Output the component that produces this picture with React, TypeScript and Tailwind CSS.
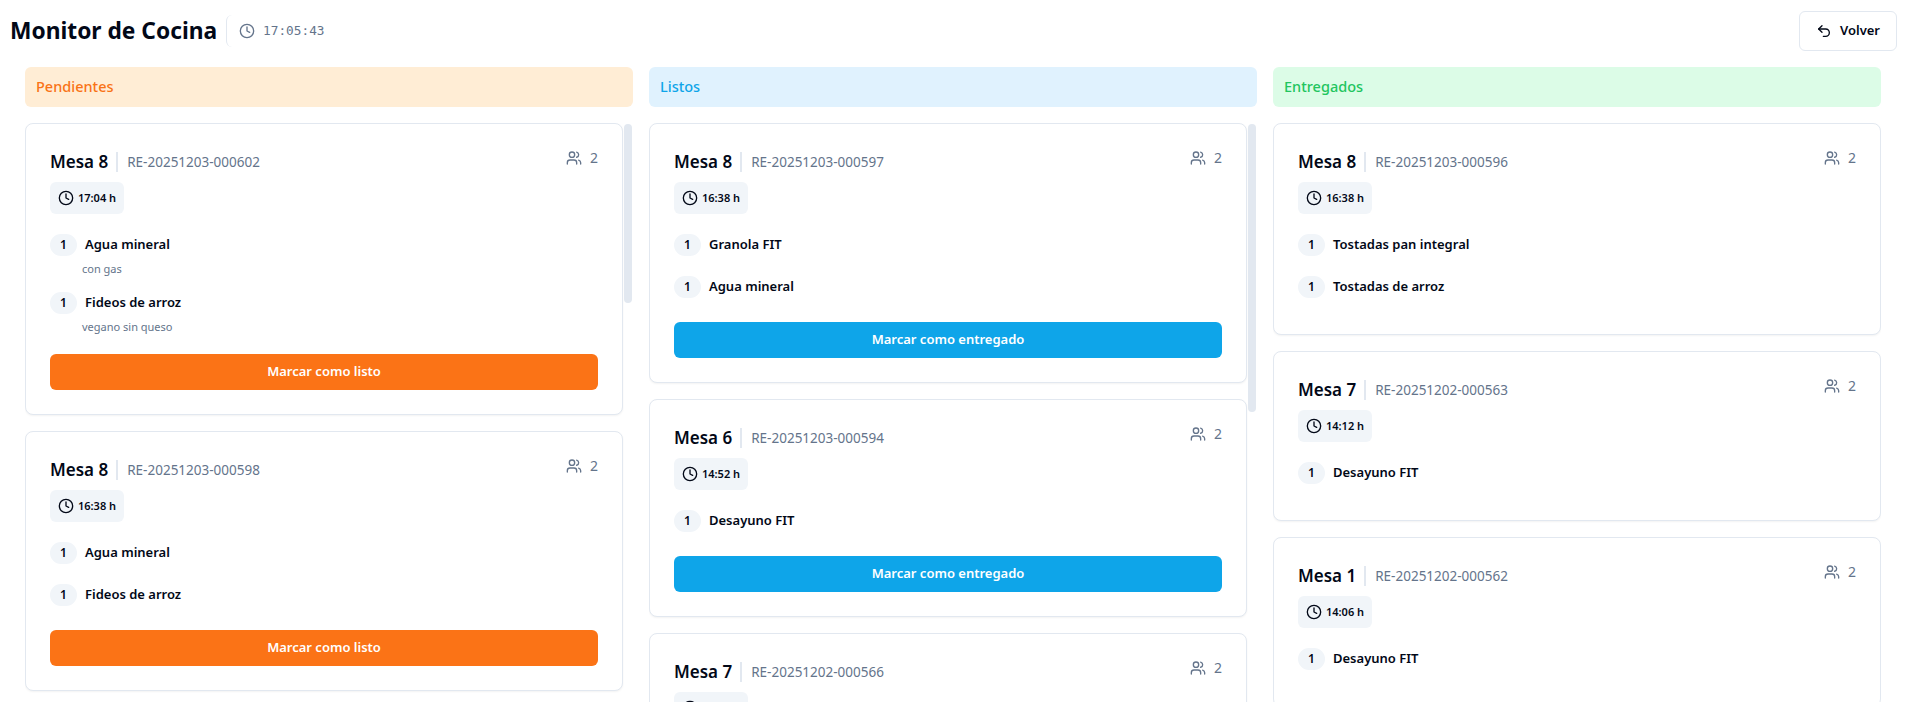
import { Clock, Undo2, Users } from "lucide-react"

type Item = { name: string; note?: string }
type Order = { mesa: number; code: string; time: string; items: Item[] }

const pendientes: Order[] = [
  { mesa: 8, code: "RE-20251203-000602", time: "17:04", items: [{ name: "Agua mineral", note: "con gas" }, { name: "Fideos de arroz", note: "vegano sin queso" }] },
  { mesa: 8, code: "RE-20251203-000598", time: "16:38", items: [{ name: "Agua mineral" }, { name: "Fideos de arroz" }] },
]

const listos: Order[] = [
  { mesa: 8, code: "RE-20251203-000597", time: "16:38", items: [{ name: "Granola FIT" }, { name: "Agua mineral" }] },
  { mesa: 6, code: "RE-20251203-000594", time: "14:52", items: [{ name: "Desayuno FIT" }] },
  { mesa: 7, code: "RE-20251202-000566", time: "14:30", items: [{ name: "Desayuno FIT" }] },
]

const entregados: Order[] = [
  { mesa: 8, code: "RE-20251203-000596", time: "16:38", items: [{ name: "Tostadas pan integral" }, { name: "Tostadas de arroz" }] },
  { mesa: 7, code: "RE-20251202-000563", time: "14:12", items: [{ name: "Desayuno FIT" }] },
  { mesa: 1, code: "RE-20251202-000562", time: "14:06", items: [{ name: "Desayuno FIT" }] },
]

function OrderCard({ order, action, buttonClass }: { order: Order; action?: string; buttonClass?: string }) {
  return (
    <div className="shrink-0 rounded-lg border border-[#e2e8f0] bg-white px-6 pt-6 pb-4 shadow-xs">
      <div className="flex items-start justify-between">
        <div className="flex h-7 items-center">
          <span className="text-[17px] leading-7 font-semibold text-[#020817]">Mesa {order.mesa}</span>
          <span className="mr-[9px] ml-2 h-5 w-0.5 bg-[#e2e8f0]"></span>
          <span className="text-[13.5px] text-[#64748b]">{order.code}</span>
        </div>
        <div className="flex h-5 items-center gap-2 text-sm text-[#64748b]">
          <Users className="size-4" />
          <span>2</span>
        </div>
      </div>

      <div className="mt-1.5 mb-5 flex h-8 w-fit items-center gap-1 rounded-md bg-[#f1f5f9] px-2 text-[11px] font-semibold text-[#020817]">
        <Clock className="size-4" />
        <span>{order.time} h</span>
      </div>

      <div>
        {order.items.map((item) => (
          <div key={item.name} className={item.note ? "h-[58px]" : "h-[42px]"}>
            <div className="flex h-[22px] items-center gap-2">
              <span className="flex h-[22px] w-[27px] items-center justify-center rounded-full bg-[#f1f5f9] text-xs font-semibold text-[#020817]">1</span>
              <span className="text-[13px] font-semibold text-[#020817]">{item.name}</span>
            </div>
            {item.note && <p className="mt-[5px] ml-8 text-[11px] leading-4 text-[#64748b]">{item.note}</p>}
          </div>
        ))}
      </div>

      {action && (
        <button className={`mt-1 mb-2 flex h-9 w-full items-center justify-center rounded-md text-[13px] font-semibold text-white ${buttonClass}`}>
          {action}
        </button>
      )}
    </div>
  )
}

export default function App() {
  return (
    <div className="flex h-screen flex-col overflow-hidden bg-white font-['Noto_Sans',sans-serif]">
      {/* TOP BAR */}
      <header className="flex shrink-0 items-start justify-between pt-[11px] pr-2 pl-2.5">
        <div className="flex h-10 items-center">
          <h1 className="text-[22.75px] font-bold text-[#020817]">Monitor de Cocina</h1>
          <div className="ml-[9px] flex h-8 items-center gap-2 rounded-l-md border-l border-[#e2e8f0] pl-3 text-[#64748b]">
            <Clock className="size-4" />
            <span className="font-['DejaVu_Sans_Mono',monospace] text-[12.75px]">17:05:43</span>
          </div>
        </div>
        <button className="flex h-10 items-center gap-2 rounded-md border border-[#e2e8f0] bg-white px-4 text-[13px] font-semibold text-[#020817]">
          <Undo2 className="size-4" />
          Volver
        </button>
      </header>

      {/* COLUMNS */}
      <div className="mt-4 grid min-h-0 flex-1 grid-cols-3 gap-4 pr-6 pl-[25px]">
        <div className="flex min-h-0 flex-col">
          <div className="flex h-10 shrink-0 items-center rounded-md bg-[#ffedd5] px-[11px] text-[14.5px] font-medium text-[#f97316]">Pendientes</div>
          <div className="relative mt-4 flex min-h-0 flex-1 flex-col gap-4 overflow-hidden pr-2.5">
            {pendientes.map((order) => (
              <OrderCard key={order.code} order={order} action="Marcar como listo" buttonClass="bg-[#fb7316]" />
            ))}
            <div className="absolute top-px right-px h-[179px] w-2 rounded-full bg-[#e2e8f0]"></div>
          </div>
        </div>

        <div className="flex min-h-0 flex-col">
          <div className="flex h-10 shrink-0 items-center rounded-md bg-[#e0f2fe] px-[11px] text-[14.5px] font-medium text-[#0ea5e9]">Listos</div>
          <div className="relative mt-4 flex min-h-0 flex-1 flex-col gap-4 overflow-hidden pr-2.5">
            {listos.map((order) => (
              <OrderCard key={order.code} order={order} action="Marcar como entregado" buttonClass="bg-[#0ea5e9]" />
            ))}
            <div className="absolute top-px right-px h-[288px] w-2 rounded-full bg-[#e2e8f0]"></div>
          </div>
        </div>

        <div className="flex min-h-0 flex-col">
          <div className="flex h-10 shrink-0 items-center rounded-md bg-[#dcfce7] px-[11px] text-[14.5px] font-medium text-[#22c55e]">Entregados</div>
          <div className="mt-4 flex min-h-0 flex-1 flex-col gap-4 overflow-hidden">
            {entregados.map((order) => (
              <OrderCard key={order.code} order={order} />
            ))}
          </div>
        </div>
      </div>
    </div>
  )
}
